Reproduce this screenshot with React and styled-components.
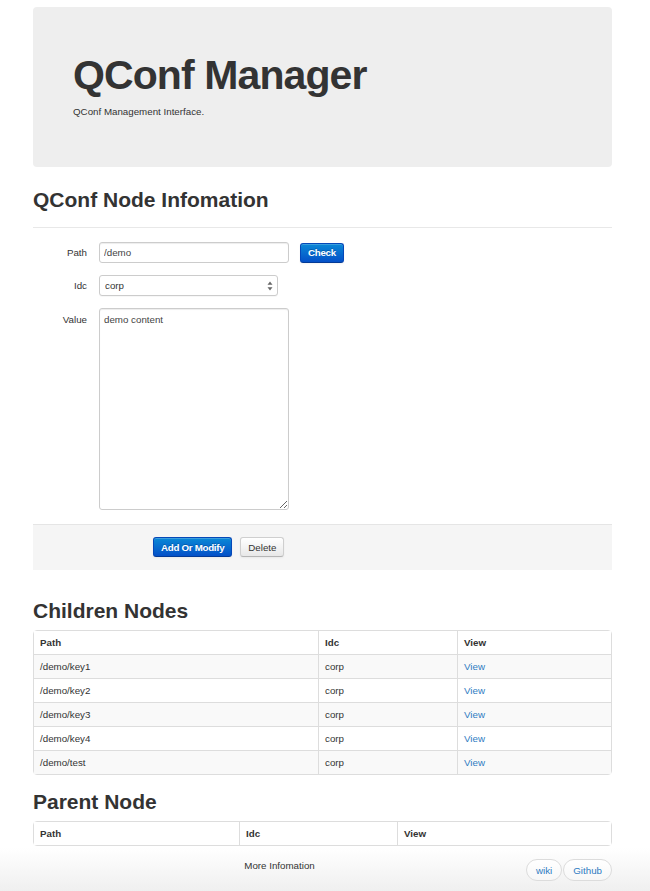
import React from "react";
import styled, { createGlobalStyle } from "styled-components";

const Global = createGlobalStyle`
  html, body { margin: 0; padding: 0; background: #fff; }
  body {
    font-family: "Liberation Sans", Arial, Helvetica, sans-serif;
    font-size: 9.75px;
    line-height: 13px;
    color: #333;
  }
  * { box-sizing: border-box; }
`;

const Page = styled.div`
  padding-top: 7px;
`;

const Container = styled.div`
  margin-left: 33px;
  width: 579px;
`;

const Jumbotron = styled.header`
  background: #eeeeee;
  border-radius: 4px;
  padding: 48px 40px 49px;
`;

const Title = styled.h1`
  margin: 0;
  font-size: 41px;
  line-height: 41px;
  letter-spacing: -0.9px;
  font-weight: bold;
  color: #333;
`;

const Lead = styled.p`
  margin: 9px 0 0;
  font-size: 9.75px;
  line-height: 13px;
`;

const SectionTitle = styled.h2`
  margin: ${(p) => p.$top}px 0 0;
  font-size: 21px;
  line-height: 21px;
  font-weight: bold;
  color: #333;
`;

const Rule = styled.hr`
  margin: 17px 0 0;
  border: 0;
  border-top: 1px solid #e8e8e8;
  height: 0;
`;

const Form = styled.form`
  margin-top: 14px;
`;

const Fields = styled.div`
  display: flex;
  flex-direction: column;
  gap: 12px;
`;

const Row = styled.div`
  display: grid;
  grid-template-columns: 54px auto;
  column-gap: 12px;
  align-items: ${(p) => (p.$top ? "start" : "center")};
  justify-content: start;
`;

const Label = styled.label`
  text-align: right;
  font-size: 9.75px;
  line-height: 13px;
  padding-top: ${(p) => (p.$top ? "5px" : "0")};
`;

const Controls = styled.div`
  display: flex;
  align-items: center;
  gap: 11px;
`;

const fieldBase = `
  font-family: "Liberation Sans", Arial, Helvetica, sans-serif;
  font-size: 9.75px;
  color: #555;
  background: #fff;
  border: 1px solid #ccc;
  border-radius: 3px;
  box-shadow: inset 0 1px 1px rgba(0,0,0,0.075);
  outline: none;
`;

const TextInput = styled.input`
  ${fieldBase}
  width: 190px;
  height: 21px;
  padding: 0 4px;
  color: #444;
`;

const SelectWrap = styled.div`
  position: relative;
  width: 179px;
  height: 21px;
`;

const Select = styled.select`
  ${fieldBase}
  appearance: none;
  -webkit-appearance: none;
  width: 100%;
  height: 100%;
  padding: 0 5px;
  color: #333;
  box-shadow: 0 1px 0 rgba(0,0,0,0.03);
`;

const SelectArrow = styled.svg`
  position: absolute;
  right: 5px;
  top: 6px;
  pointer-events: none;
`;

const TextArea = styled.textarea`
  ${fieldBase}
  width: 190px;
  height: 202px;
  padding: 4px 4px;
  line-height: 13px;
  color: #444;
  resize: both;
`;

const Button = styled.button`
  font-family: "Liberation Sans", Arial, Helvetica, sans-serif;
  font-size: 9.75px;
  height: 20px;
  padding: 0 7px;
  border-radius: 3px;
  cursor: pointer;
  ${(p) =>
    p.$primary
      ? `
    color: #fff;
    font-weight: bold;
    letter-spacing: -0.3px;
    background: linear-gradient(#0a88d6, #0450c8);
    border: 1px solid #0548b8;
    border-bottom-color: #033a96;
    text-shadow: 0 -1px 0 rgba(0,0,0,0.2);
    box-shadow: inset 0 1px 0 rgba(255,255,255,0.2), 0 1px 2px rgba(0,0,0,0.05);
  `
      : `
    color: #333;
    background: linear-gradient(#ffffff, #e8e8e8);
    border: 1px solid #cfcfcf;
    border-bottom-color: #b5b5b5;
    box-shadow: inset 0 1px 0 rgba(255,255,255,0.2), 0 1px 2px rgba(0,0,0,0.05);
  `}
`;

const Actions = styled.div`
  margin-top: 14px;
  background: #f5f5f5;
  border-top: 1px solid #e5e5e5;
  padding: 12px 0 13px 120px;
  display: flex;
  gap: 8px;
`;

const Table = styled.table`
  margin-top: 9px;
  width: 579px;
  table-layout: fixed;
  border-collapse: separate;
  border-spacing: 0;
  border: 1px solid #dddddd;
  border-radius: 4px;
  font-size: 9.75px;
`;

const Cell = styled.td`
  height: 24px;
  padding: 0 6px;
  line-height: 13px;
  text-align: left;
  vertical-align: middle;
  border-top: 1px solid #dddddd;
  border-left: 1px solid #dddddd;
  &:first-child {
    border-left: 0;
  }
  thead & {
    height: 23px;
    border-top: 0;
  }
`;

const HeadCell = styled(Cell).attrs({ as: "th" })`
  font-weight: bold;
`;

const BodyRow = styled.tr`
  background: ${(p) => (p.$striped ? "#f9f9f9" : "#fff")};
`;

const HeadRow = styled.tr`
  background: #fff;
`;

const Link = styled.a`
  color: #2f7bc2;
  text-decoration: none;
`;

const Footer = styled.footer`
  margin-top: 2px;
  height: 52px;
  background: linear-gradient(#ffffff, #ececec);
`;

const FooterInner = styled.div`
  margin-left: 33px;
  width: 579px;
  padding-top: 11px;
  display: flex;
  align-items: flex-start;
`;

const FooterText = styled.div`
  flex: 1;
  text-align: center;
  line-height: 13px;
`;

const PillGroup = styled.div`
  display: flex;
  gap: 1px;
`;

const Pill = styled.a`
  display: inline-flex;
  align-items: center;
  height: 22px;
  padding: 0 9px;
  border: 1px solid #dcdcdc;
  border-radius: 11px;
  background: linear-gradient(#ffffff, #f7f7f7);
  color: #2f7bc2;
  text-decoration: none;
  font-size: 9.75px;
`;

const children = ["/demo/key1", "/demo/key2", "/demo/key3", "/demo/key4", "/demo/test"];

export default function App() {
  return (
    <Page>
      <Global />
      <Container>
        <Jumbotron>
          <Title>QConf Manager</Title>
          <Lead>QConf Management Interface.</Lead>
        </Jumbotron>

        <SectionTitle $top={22}>QConf Node Infomation</SectionTitle>
        <Rule />
        <Form onSubmit={(e) => e.preventDefault()}>
          <Fields>
            <Row>
              <Label>Path</Label>
              <Controls>
                <TextInput defaultValue="/demo" />
                <Button $primary type="button">Check</Button>
              </Controls>
            </Row>
            <Row>
              <Label>Idc</Label>
              <SelectWrap>
                <Select defaultValue="corp">
                  <option value="corp">corp</option>
                </Select>
                <SelectArrow width="6" height="10" viewBox="0 0 6 10">
                  <path d="M3 0.5 L5.5 3.8 L0.5 3.8 Z" fill="#666" />
                  <path d="M3 9.5 L5.5 6.2 L0.5 6.2 Z" fill="#666" />
                </SelectArrow>
              </SelectWrap>
            </Row>
            <Row $top>
              <Label $top>Value</Label>
              <TextArea defaultValue="demo content" />
            </Row>
          </Fields>
          <Actions>
            <Button $primary type="button">Add Or Modify</Button>
            <Button type="button">Delete</Button>
          </Actions>
        </Form>

        <SectionTitle $top={30}>Children Nodes</SectionTitle>
        <Table>
          <colgroup>
            <col style={{ width: "284px" }} />
            <col style={{ width: "139px" }} />
            <col />
          </colgroup>
          <thead>
            <HeadRow>
              <HeadCell>Path</HeadCell>
              <HeadCell>Idc</HeadCell>
              <HeadCell>View</HeadCell>
            </HeadRow>
          </thead>
          <tbody>
            {children.map((p, i) => (
              <BodyRow key={p} $striped={i % 2 === 0}>
                <Cell>{p}</Cell>
                <Cell>corp</Cell>
                <Cell>
                  <Link href="#">View</Link>
                </Cell>
              </BodyRow>
            ))}
          </tbody>
        </Table>

        <SectionTitle $top={16}>Parent Node</SectionTitle>
        <Table>
          <colgroup>
            <col style={{ width: "205px" }} />
            <col style={{ width: "158px" }} />
            <col />
          </colgroup>
          <thead>
            <HeadRow>
              <HeadCell>Path</HeadCell>
              <HeadCell>Idc</HeadCell>
              <HeadCell>View</HeadCell>
            </HeadRow>
          </thead>
        </Table>
      </Container>
      <Footer>
        <FooterInner>
          <FooterText>More Infomation</FooterText>
          <PillGroup>
            <Pill href="#">wiki</Pill>
            <Pill href="#">Github</Pill>
          </PillGroup>
        </FooterInner>
      </Footer>
    </Page>
  );
}
